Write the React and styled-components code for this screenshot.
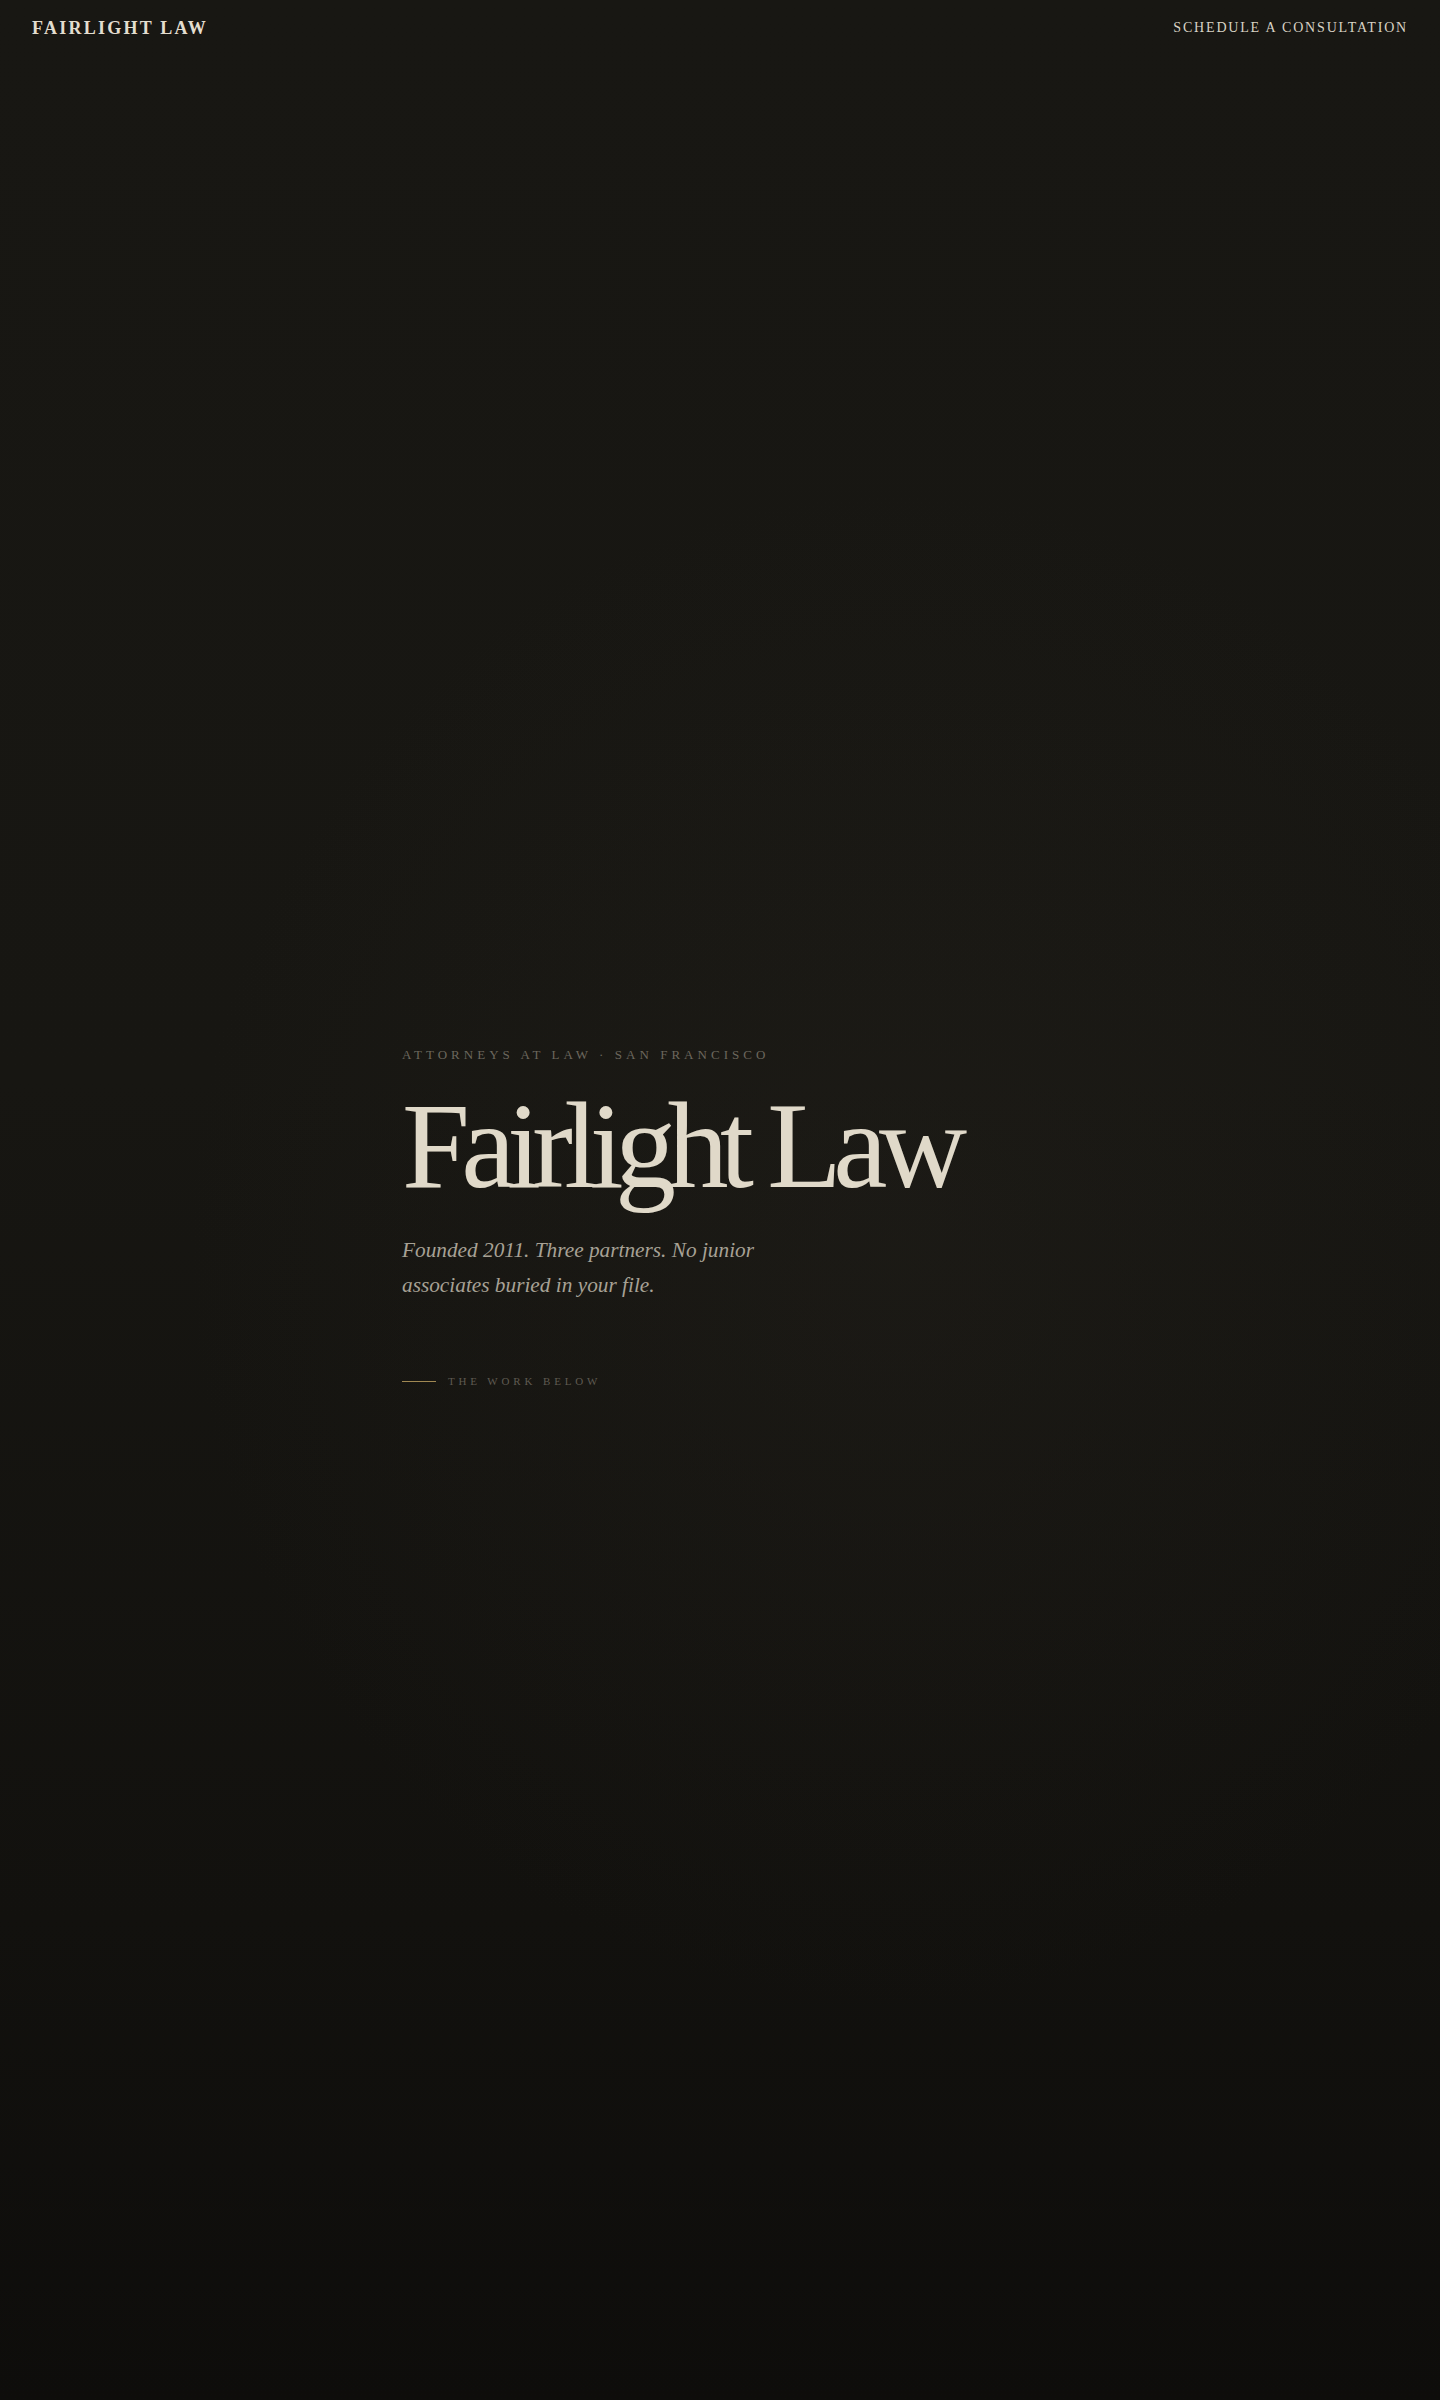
import styled, { createGlobalStyle } from "styled-components";

const GlobalStyle = createGlobalStyle`
    html, body {
        margin: 0;
        padding: 0;
        background: #0f0e0c;
    }
    * {
        box-sizing: border-box;
    }
`;

const App = () => {
    return (
        <Page>
            <GlobalStyle />
            <Header>
                <Logo>Fairlight Law</Logo>
                <NavLink href="#consult">Schedule a Consultation</NavLink>
            </Header>
            <Hero>
                <HeroInner>
                    <Eyebrow>Attorneys at Law · San Francisco</Eyebrow>
                    <Title>Fairlight Law</Title>
                    <Lede>Founded 2011. Three partners. No junior associates buried in your file.</Lede>
                    <ScrollCue>
                        <Rule />
                        <CueText>The work below</CueText>
                    </ScrollCue>
                </HeroInner>
            </Hero>
        </Page>
    );
}

const Page = styled.div`
    min-height: 2400px;
    display: flex;
    flex-direction: column;
    font-family: "Liberation Serif", "Times New Roman", serif;
    background:
        radial-gradient(ellipse 70% 45% at 62% 52%, rgba(40, 37, 31, 0.3), rgba(0, 0, 0, 0) 70%),
        linear-gradient(180deg, #181713 0%, #171612 45%, #12110e 80%, #0e0d0b 100%);
`;

const Header = styled.header`
    display: flex;
    justify-content: space-between;
    align-items: center;
    height: 56px;
    padding: 0 32px;
`;

const Logo = styled.div`
    font-size: 18px;
    font-weight: 700;
    letter-spacing: 0.125em;
    text-transform: uppercase;
    color: #e3ddcf;
    margin-top: 1px;
`;

const NavLink = styled.a`
    font-size: 14px;
    letter-spacing: 0.13em;
    text-transform: uppercase;
    color: #d9d3c5;
    text-decoration: none;
    margin-top: -1px;
`;

const Hero = styled.section`
    flex: 1;
    display: flex;
    align-items: center;
    justify-content: center;
    padding-bottom: 22px;
`;

const HeroInner = styled.div`
    width: 636px;
    display: flex;
    flex-direction: column;
    align-items: flex-start;
`;

const Eyebrow = styled.div`
    font-size: 13px;
    letter-spacing: 0.31em;
    text-transform: uppercase;
    color: #6c675d;
`;

const Title = styled.h1`
    margin: 22px 0 0 0;
    font-size: 122px;
    font-weight: 400;
    line-height: 1;
    letter-spacing: -0.07em;
    color: #e0d9c9;
`;

const Lede = styled.p`
    margin: 26px 0 0 0;
    max-width: 360px;
    font-size: 21.3px;
    font-style: italic;
    line-height: 35px;
    color: #a7a195;
`;

const ScrollCue = styled.div`
    display: flex;
    align-items: center;
    gap: 12px;
    margin-top: 72px;
`;

const Rule = styled.span`
    display: block;
    width: 34px;
    height: 1px;
    background: #a08852;
`;

const CueText = styled.span`
    font-size: 11px;
    letter-spacing: 0.35em;
    text-transform: uppercase;
    color: #5f5a51;
`;

export default App;
